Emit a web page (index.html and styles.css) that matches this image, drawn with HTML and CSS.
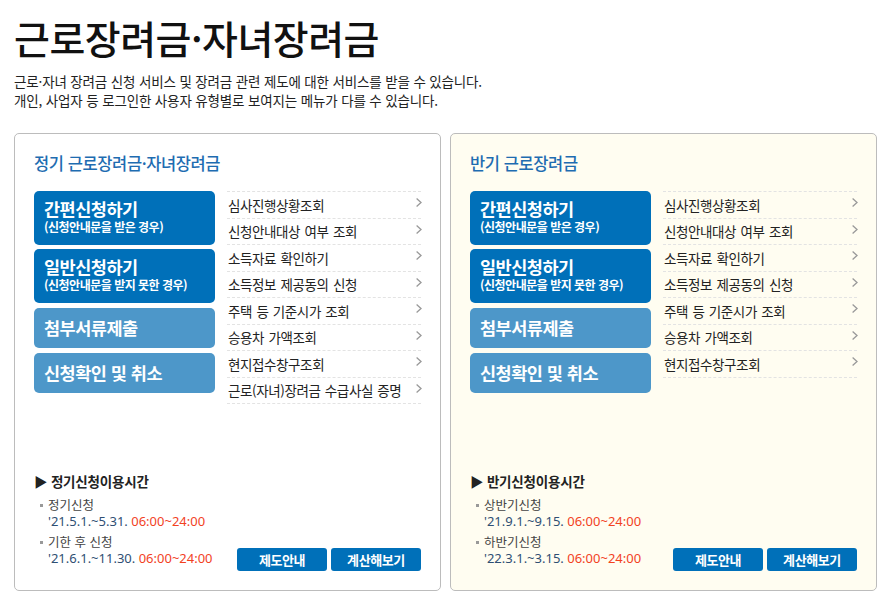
FILE: index.html
```html
<!DOCTYPE html>
<html lang="ko">
<head>
    <meta charset="UTF-8">
    <meta name="viewport" content="width=device-width, initial-scale=1.0">
    <title>근로장려금·자녀장려금</title>
    <link rel="stylesheet" href="styles.css">
</head>
<body>

    <header class="page-head">
        <h1>근로장려금·자녀장려금</h1>
        <p>근로·자녀 장려금 신청 서비스 및 장려금 관련 제도에 대한 서비스를 받을 수 있습니다.<br>
        개인, 사업자 등 로그인한 사용자 유형별로 보여지는 메뉴가 다를 수 있습니다.</p>
    </header>

    <div class="panels">

        <!-- 정기 -->
        <section class="panel">
            <h2 class="panel-title">정기 근로장려금·자녀장려금</h2>
            <div class="panel-body">
                <div class="apply-btns">
                    <a href="#" class="apply-btn main"><span>간편신청하기</span><small>(신청안내문을 받은 경우)</small></a>
                    <a href="#" class="apply-btn main"><span>일반신청하기</span><small>(신청안내문을 받지 못한 경우)</small></a>
                    <a href="#" class="apply-btn sub">첨부서류제출</a>
                    <a href="#" class="apply-btn sub">신청확인 및 취소</a>
                </div>
                <ul class="link-list">
                    <li><a href="#">심사진행상황조회<i class="arr"></i></a></li>
                    <li><a href="#">신청안내대상 여부 조회<i class="arr"></i></a></li>
                    <li><a href="#">소득자료 확인하기<i class="arr"></i></a></li>
                    <li><a href="#">소득정보 제공동의 신청<i class="arr"></i></a></li>
                    <li><a href="#">주택 등 기준시가 조회<i class="arr"></i></a></li>
                    <li><a href="#">승용차 가액조회<i class="arr"></i></a></li>
                    <li><a href="#">현지접수창구조회<i class="arr"></i></a></li>
                    <li><a href="#">근로(자녀)장려금 수급사실 증명<i class="arr"></i></a></li>
                </ul>
            </div>
            <div class="panel-foot">
                <div class="time-info">
                    <h3>▶ 정기신청이용시간</h3>
                    <dl>
                        <dt>정기신청</dt>
                        <dd>'21.5.1.~5.31. <em>06:00~24:00</em></dd>
                        <dt>기한 후 신청</dt>
                        <dd>'21.6.1.~11.30. <em>06:00~24:00</em></dd>
                    </dl>
                </div>
                <div class="foot-btns">
                    <a href="#" class="foot-btn">제도안내</a>
                    <a href="#" class="foot-btn">계산해보기</a>
                </div>
            </div>
        </section>

        <!-- 반기 -->
        <section class="panel half">
            <h2 class="panel-title">반기 근로장려금</h2>
            <div class="panel-body">
                <div class="apply-btns">
                    <a href="#" class="apply-btn main"><span>간편신청하기</span><small>(신청안내문을 받은 경우)</small></a>
                    <a href="#" class="apply-btn main"><span>일반신청하기</span><small>(신청안내문을 받지 못한 경우)</small></a>
                    <a href="#" class="apply-btn sub">첨부서류제출</a>
                    <a href="#" class="apply-btn sub">신청확인 및 취소</a>
                </div>
                <ul class="link-list">
                    <li><a href="#">심사진행상황조회<i class="arr"></i></a></li>
                    <li><a href="#">신청안내대상 여부 조회<i class="arr"></i></a></li>
                    <li><a href="#">소득자료 확인하기<i class="arr"></i></a></li>
                    <li><a href="#">소득정보 제공동의 신청<i class="arr"></i></a></li>
                    <li><a href="#">주택 등 기준시가 조회<i class="arr"></i></a></li>
                    <li><a href="#">승용차 가액조회<i class="arr"></i></a></li>
                    <li><a href="#">현지접수창구조회<i class="arr"></i></a></li>
                </ul>
            </div>
            <div class="panel-foot">
                <div class="time-info">
                    <h3>▶ 반기신청이용시간</h3>
                    <dl>
                        <dt>상반기신청</dt>
                        <dd>'21.9.1.~9.15. <em>06:00~24:00</em></dd>
                        <dt>하반기신청</dt>
                        <dd>'22.3.1.~3.15. <em>06:00~24:00</em></dd>
                    </dl>
                </div>
                <div class="foot-btns">
                    <a href="#" class="foot-btn">제도안내</a>
                    <a href="#" class="foot-btn">계산해보기</a>
                </div>
            </div>
        </section>

    </div>

</body>
</html>
```

FILE: styles.css
```css
:root {
    --blue: #0070b9;
    --blue-light: #4d97c9;
    --title-blue: #1e6cb1;
    --text: #222222;
    --red: #f2421f;
}

* {
    margin: 0;
    padding: 0;
    box-sizing: border-box;
}

body {
    font-family: "Noto Sans CJK KR", "Noto Sans", sans-serif;
    color: var(--text);
    background: #ffffff;
    padding: 0 14px;
}

a {
    text-decoration: none;
    color: inherit;
}

ul {
    list-style: none;
}

/* 상단 제목 */
.page-head h1 {
    font-size: 39px;
    font-weight: 500;
    line-height: 46px;
    padding-top: 14px;
    letter-spacing: -0.5px;
    color: #111;
}

.page-head p {
    font-size: 13.5px;
    line-height: 19px;
    margin-top: 12px;
    letter-spacing: -0.15px;
}

/* 패널 */
.panels {
    display: flex;
    gap: 9px;
    margin-top: 23px;
}

.panel {
    flex: none;
    width: 427px;
    height: 458px;
    border: 1px solid #bcbcbc;
    border-radius: 5px;
    padding: 17px 19px 19px 19px;
    display: flex;
    flex-direction: column;
    background: #ffffff;
}

.panel.half {
    background: #fffdf1;
}

.panel-title {
    font-size: 16.5px;
    font-weight: 500;
    line-height: 24px;
    color: var(--title-blue);
    letter-spacing: -0.4px;
    margin-bottom: 16px;
}

.panel-body {
    display: flex;
    gap: 12px;
}

/* 왼쪽 신청 버튼 */
.apply-btns {
    flex: 0 0 181px;
    display: flex;
    flex-direction: column;
    gap: 4px;
}

.apply-btn {
    display: flex;
    flex-direction: column;
    justify-content: center;
    border-radius: 5px;
    color: #ffffff;
    font-size: 17.5px;
    font-weight: 700;
    line-height: 20px;
    padding: 0 10px;
    letter-spacing: -0.5px;
}

.apply-btn.main {
    background: var(--blue);
    height: 54px;
    padding-bottom: 3px;
}

.apply-btn.main span {
    line-height: 18px;
}

.apply-btn.sub {
    background: var(--blue-light);
    height: 40px;
    margin-top: 1px;
}

.apply-btn small {
    font-size: 12px;
    line-height: 13px;
    margin-top: 2px;
    letter-spacing: -0.5px;
}

/* 오른쪽 링크 목록 */
.link-list {
    flex: 1;
    border-top: 1px dashed #e3e3e3;
}

.link-list li {
    border-bottom: 1px dashed #e3e3e3;
}

.link-list a {
    display: flex;
    justify-content: space-between;
    align-items: center;
    height: 25.5px;
    font-size: 13.5px;
    letter-spacing: -0.4px;
    word-spacing: 1px;
    padding-left: 1px;
    color: var(--text);
}

.arr {
    width: 6px;
    height: 9px;
    margin-right: -1px;
    margin-bottom: 4px;
    background: url("data:image/svg+xml,%3Csvg xmlns='http://www.w3.org/2000/svg' width='6' height='9' viewBox='0 0 6 9'%3E%3Cpath d='M0.6 0.6 L5 4.5 L0.6 8.4' fill='none' stroke='%23999' stroke-width='1.3'/%3E%3C/svg%3E") no-repeat;
}

/* 하단 이용시간 */
.panel-foot {
    margin-top: auto;
    display: flex;
    justify-content: space-between;
    align-items: flex-end;
}

.time-info h3 {
    font-size: 13.5px;
    font-weight: 700;
    line-height: 18px;
    letter-spacing: -0.2px;
    margin-bottom: 7px;
}

.time-info dl {
    padding-left: 6px;
    margin-bottom: 4px;
}

.time-info dt {
    font-size: 12.5px;
    line-height: 16px;
    color: #444;
    position: relative;
    padding-left: 8px;
}

.time-info dt::before {
    content: "";
    position: absolute;
    left: 0;
    top: 7px;
    width: 3px;
    height: 3px;
    background: #999;
}

.time-info dd {
    font-family: "Noto Sans", "Noto Sans CJK KR", sans-serif;
    font-size: 13px;
    line-height: 17px;
    color: #2f4f73;
    padding-left: 8px;
    margin-bottom: 4px;
}

.time-info dd:last-child {
    margin-bottom: 0;
}

.time-info em {
    font-style: normal;
    color: var(--red);
}

.foot-btns {
    display: flex;
    gap: 4px;
}

.foot-btn {
    width: 90px;
    height: 23px;
    line-height: 23px;
    text-align: center;
    background: var(--blue);
    color: #ffffff;
    border-radius: 3px;
    font-size: 13px;
    font-weight: 700;
    letter-spacing: -0.4px;
}
```
